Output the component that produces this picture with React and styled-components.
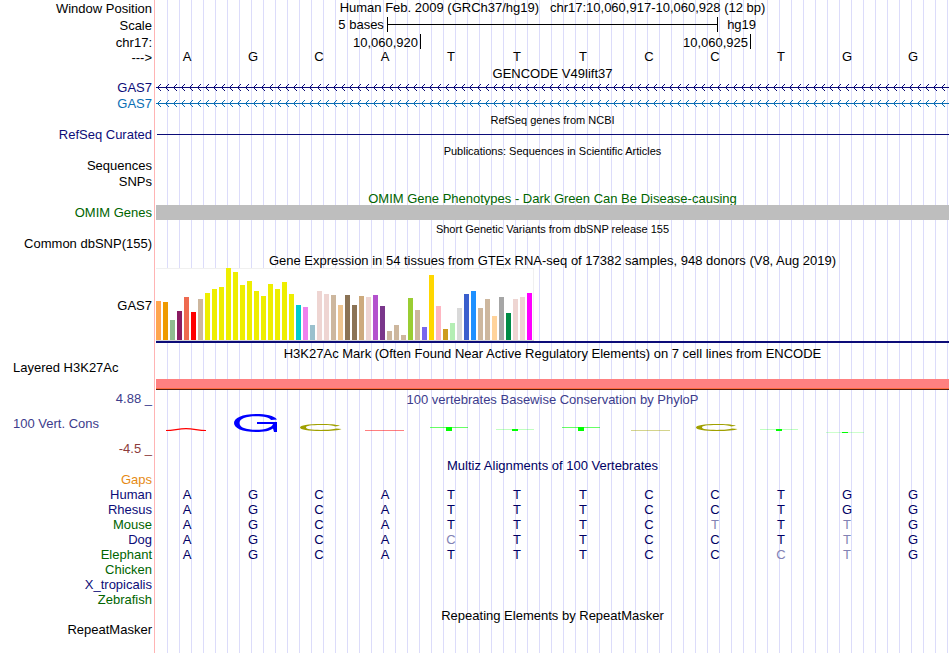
import React from "react";
import styled, { createGlobalStyle } from "styled-components";

const GlobalStyle = createGlobalStyle`
  * { box-sizing: border-box; }
  body {
    margin: 0;
    background: #fff;
    color: #000;
    font: 13px/15px "Liberation Sans", Arial, Helvetica, sans-serif;
  }
`;

const Browser = styled.main`
  min-height: 100vh;
  overflow: hidden;
  background-image:
    linear-gradient(to right, #fff 154px, #ffb4b4 154px 155px, #fff 155px 156px, transparent 156px),
    repeating-linear-gradient(to right, transparent 0 11px, #dcdcfa 11px 12px);
`;

const Row = styled.div`
  display: grid;
  grid-template-columns: 155px minmax(0, 1fr);
  height: ${(p) => p.$h || 16}px;
`;

const Label = styled.div`
  padding: ${(p) => (p.$left ? "0 0 0 13px" : "0 3px 0 0")};
  margin-top: ${(p) => p.$top || 0}px;
  text-align: ${(p) => (p.$left ? "left" : "right")};
  align-self: ${(p) => (p.$middle ? "center" : "start")};
  color: ${(p) => p.$color || "inherit"};
  white-space: nowrap;
`;

const Title = styled.h2`
  grid-column: 2;
  margin: ${(p) => p.$top ?? 1}px 0 0;
  text-align: center;
  font-weight: 400;
  font-size: ${(p) => (p.$small ? 11 : 13)}px;
  line-height: 15px;
  white-space: pre;
  color: ${(p) => p.$color || "inherit"};
`;

const Scale = styled.div`
  display: grid;
  grid-template-columns: 7fr 10fr 7fr;
`;

const ScaleText = styled.span`
  padding: 0 3px 0 9px;
  text-align: ${(p) => p.$side};
`;

const ScaleBar = styled.div`
  display: flex;
  align-items: center;
  height: 15px;
  border: solid #000;
  border-width: 0 1px;

  &::before {
    content: "";
    flex: 1;
    height: 1px;
    background: #000;
  }
`;

const Ruler = styled.div`
  display: grid;
  grid-template-columns: 4fr 5fr 3fr;
  padding: 0 1px 0 2px;
`;

const RulerMark = styled.span`
  height: 15px;
  padding: 1px 2px 0 0;
  border-right: 1px solid #000;
  text-align: right;
`;

const Cells = styled.div`
  display: grid;
  grid-template-columns: repeat(12, minmax(0, 1fr));
  margin-left: -1px;
  padding-right: 4px;
`;

const Base = styled.span`
  text-align: center;
  color: ${(p) => p.$color};
`;

const PlotLine = styled.div`
  margin: 7px 1px 0 2px;
  height: 1px;
  background: #0c0c78;
`;

const Band = styled.div`
  height: 15px;
  margin: 0 1px;
  background: #bebebe;
`;

const SignalBand = styled.div`
  align-self: end;
  height: 11px;
  margin: 0 1px;
  background: #ff8080;
  border-bottom: 1px solid #5a2010;
  box-shadow: inset 0 -1px #ff6c40;
`;

const StrandSvg = styled.svg`
  display: block;
  width: calc(100% - 2px);
  height: 15px;
  margin-left: 1px;
  color: ${(p) => p.$color};
`;

const Expression = styled.div`
  margin: 0 1px;
  border-bottom: 2px solid #0c0c78;

  svg { display: block; }
`;

const LogoSvg = styled.svg`
  display: block;
  width: 66px;
  height: 22px;
  margin: 5px auto 0;
`;

const AxisLabels = styled.div`
  display: flex;
  flex-direction: column;
  gap: 10px;
  padding-top: 9px;

  ${Label} { align-self: stretch; }
`;

const NAVY = "#0c0c78";
const GREEN = "#006400";

function Strand({ id, color }) {
  return (
    <StrandSvg $color={color} aria-hidden="true">
      <defs>
        <pattern id={id} width="8" height="15" patternUnits="userSpaceOnUse">
          <path
            d="M1 7h1v1h-1zM2 6h1v1h-1zM3 5h1v1h-1zM4 4h1v1h-1zM2 8h1v1h-1zM3 9h1v1h-1zM4 10h1v1h-1zM0 7h8v1h-8z"
            fill="currentColor"
            shapeRendering="crispEdges"
          />
        </pattern>
      </defs>
      <rect width="100%" height="15" fill={`url(#${id})`} />
    </StrandSvg>
  );
}

const YELLOW = Array(13).fill("#eeee00");
const TISSUE_COLORS = [
  "#ffa54f", "#ee9a00", "#8fbc8f", "#8b1c62", "#ee6a50", "#ff0000", "#cdb79e",
  ...YELLOW,
  "#00cdcd", "#ee82ee", "#9ac0cd", "#eed5d2", "#eed5d2", "#cdb79e", "#eec591",
  "#8b7355", "#8b7355", "#cdaa7d", "#eed5d2", "#b452cd", "#7a378b", "#cdb79e",
  "#cdb79e", "#cdb79e", "#9acd32", "#cdb79e", "#7a67ee", "#ffd700", "#ffb6c1",
  "#cd9b1d", "#b4eeb4", "#d9d9d9", "#3a5fcd", "#1e90ff", "#cdb79e", "#cdb79e",
  "#ffd39b", "#a6a6a6", "#008b45", "#eed5d2", "#eed5d2", "#ff00ff",
];
const TISSUE_LEVELS = [
  39, 38, 20, 29, 43, 28, 41, 47, 51, 53, 72, 68, 55, 59, 49, 44, 56, 51, 58, 46,
  35, 33, 15, 49, 46, 45, 35, 45, 35, 44, 43, 45, 34, 9, 15, 5, 42, 30, 13, 65,
  34, 11, 17, 32, 46, 49, 32, 41, 24, 43, 27, 41, 43, 47,
];

function ExpressionChart() {
  return (
    <svg width="378" height="73" shapeRendering="crispEdges" role="img" aria-label="GAS7 expression by tissue">
      <rect width="378" height="73" fill="#fff" />
      <path d="M0 0h378v73h-1v-72h-377z" fill="#f0f0f0" />
      <rect y="72" width="378" height="1" fill="#d4d4d4" />
      {TISSUE_LEVELS.map((level, i) => (
        <rect key={i} x={i * 7} y={72 - level} width="5" height={level} fill={TISSUE_COLORS[i]} />
      ))}
    </svg>
  );
}

const peak = (line, opacity, block) => (
  <>
    <rect x="12" y={line} width="38" height="1" fill="#00ff00" opacity={opacity} />
    <rect x="28" y={line} width="6" height={block} fill="#00ff00" />
  </>
);

const openRing = (
  <path
    d="M54 13.8C50 12.3 43 12 35 12C22 12 14 13.2 14 15.5S22 19 35 19C45 19 53 18.4 55.5 17L50 16.6C48 17.5 42 17.9 35 17.9C25 17.9 20 17.2 20 15.5S25 13.1 35 13.1C42 13.1 47 13.4 49 14.4Z"
    fill="#a0a000"
  />
);

const LOGOS = [
  <path d="M12 18.5C20 18.5 24 16.7 32 16.700S44 18.5 52 18.5" fill="none" stroke="#ff0000" strokeWidth="1.2" />,
  <path
    d="M57 7.5C54 3.5 46 2 36 2C22 2 14 6 14 11S22 20 36 20C44 20 50 19 53 16.5L54 20H57V10H37V12H53C52 15.5 45 17.8 36 17.8C26 17.8 19.500 15.5 19.5 11S26 4.2 36 4.2C44 4.2 50 5.5 51 8Z"
    fill="#0000ff"
  />,
  openRing,
  <rect x="13" y="18" width="39" height="1" fill="#ff0000" opacity=".5" />,
  peak(15, 0.6, 4),
  peak(17, 0.25, 2),
  peak(15, 0.6, 4),
  <rect x="15" y="18" width="39" height="1" fill="#a0a000" opacity=".45" />,
  openRing,
  peak(17, 0.25, 2),
  peak(20, 0.2, 1),
  null,
];

function Sequence({ bases, color, variantColor }) {
  return (
    <Cells>
      {[...bases].map((b, i) => (
        <Base key={i} $color={b === b.toLowerCase() ? variantColor : color}>
          {b.toUpperCase()}
        </Base>
      ))}
    </Cells>
  );
}

const SPECIES = [
  ["Gaps", "#e68a14", ""],
  ["Human", NAVY, "AGCATTTCCTGG"],
  ["Rhesus", NAVY, "AGCATTTCCTGG"],
  ["Mouse", GREEN, "AGCATTTCtTtG"],
  ["Dog", NAVY, "AGCAcTTCCTtG"],
  ["Elephant", GREEN, "AGCATTTCCctG"],
  ["Chicken", GREEN, ""],
  ["X_tropicalis", NAVY, ""],
  ["Zebrafish", GREEN, ""],
];

export default function App() {
  return (
    <>
      <GlobalStyle />
      <Browser>
        <Row $h={17}>
          <Label $middle>Window Position</Label>
          <Title $top={0}>{"Human Feb. 2009 (GRCh37/hg19)   chr17:10,060,917-10,060,928 (12 bp)"}</Title>
        </Row>
        <Row $h={17}>
          <Label $middle>Scale</Label>
          <Scale>
            <ScaleText $side="right">5 bases</ScaleText>
            <ScaleBar />
            <ScaleText $side="left">hg19</ScaleText>
          </Scale>
        </Row>
        <Row $h={15}>
          <Label $top={1}>chr17:</Label>
          <Ruler>
            <RulerMark>10,060,920</RulerMark>
            <RulerMark>10,060,925</RulerMark>
          </Ruler>
        </Row>
        <Row $h={17}>
          <Label $middle>{"--->"}</Label>
          <Sequence bases="AGCATTTCCTGG" color="#000" />
        </Row>

        <Row $h={14}><Title $top={0}>GENCODE V49lift37</Title></Row>
        <Row>
          <Label $color={NAVY}>GAS7</Label>
          <Strand id="strand-navy" color={NAVY} />
        </Row>
        <Row>
          <Label $color="#0a6eb4">GAS7</Label>
          <Strand id="strand-blue" color="#0a6eb4" />
        </Row>

        <Row $h={15}><Title $small>RefSeq genes from NCBI</Title></Row>
        <Row>
          <Label $color={NAVY}>RefSeq Curated</Label>
          <PlotLine />
        </Row>

        <Row $h={15}><Title $small>Publications: Sequences in Scientific Articles</Title></Row>
        <Row><Label>Sequences</Label></Row>
        <Row><Label>SNPs</Label></Row>

        <Row $h={15}><Title $color={GREEN}>OMIM Gene Phenotypes - Dark Green Can Be Disease-causing</Title></Row>
        <Row>
          <Label $color={GREEN}>OMIM Genes</Label>
          <Band />
        </Row>

        <Row $h={15}><Title $small>Short Genetic Variants from dbSNP release 155</Title></Row>
        <Row><Label>Common dbSNP(155)</Label></Row>

        <Row><Title>Gene Expression in 54 tissues from GTEx RNA-seq of 17382 samples, 948 donors (V8, Aug 2019)</Title></Row>
        <Row $h={75}>
          <Label $middle>GAS7</Label>
          <Expression><ExpressionChart /></Expression>
        </Row>

        <Row $h={17}><Title $top={3}>H3K27Ac Mark (Often Found Near Active Regulatory Elements) on 7 cell lines from ENCODE</Title></Row>
        <Row $h={30}>
          <Label $left>Layered H3K27Ac</Label>
          <SignalBand />
        </Row>

        <Row $h={17}>
          <Label $top={1} $color="#3c3c8c">4.88 _</Label>
          <Title $top={2} $color="#3c3c8c">100 vertebrates Basewise Conservation by PhyloP</Title>
        </Row>
        <Row $h={51}>
          <AxisLabels>
            <Label $left $color="#3c3c8c">100 Vert. Cons</Label>
            <Label $color="#8c3c3c">-4.5 _</Label>
          </AxisLabels>
          <Cells>
            {LOGOS.map((logo, i) => (
              <LogoSvg key={i} viewBox="0 0 66 22" aria-hidden="true">{logo}</LogoSvg>
            ))}
          </Cells>
        </Row>

        <Row $h={14}><Title $top={0} $color="#000064">Multiz Alignments of 100 Vertebrates</Title></Row>
        {SPECIES.map(([name, color, bases]) => (
          <Row key={name} $h={15}>
            <Label $color={color}>{name}</Label>
            {bases && <Sequence bases={bases} color="#000064" variantColor="#8282b4" />}
          </Row>
        ))}

        <Row $h={15}><Title>Repeating Elements by RepeatMasker</Title></Row>
        <Row><Label>RepeatMasker</Label></Row>
      </Browser>
    </>
  );
}
